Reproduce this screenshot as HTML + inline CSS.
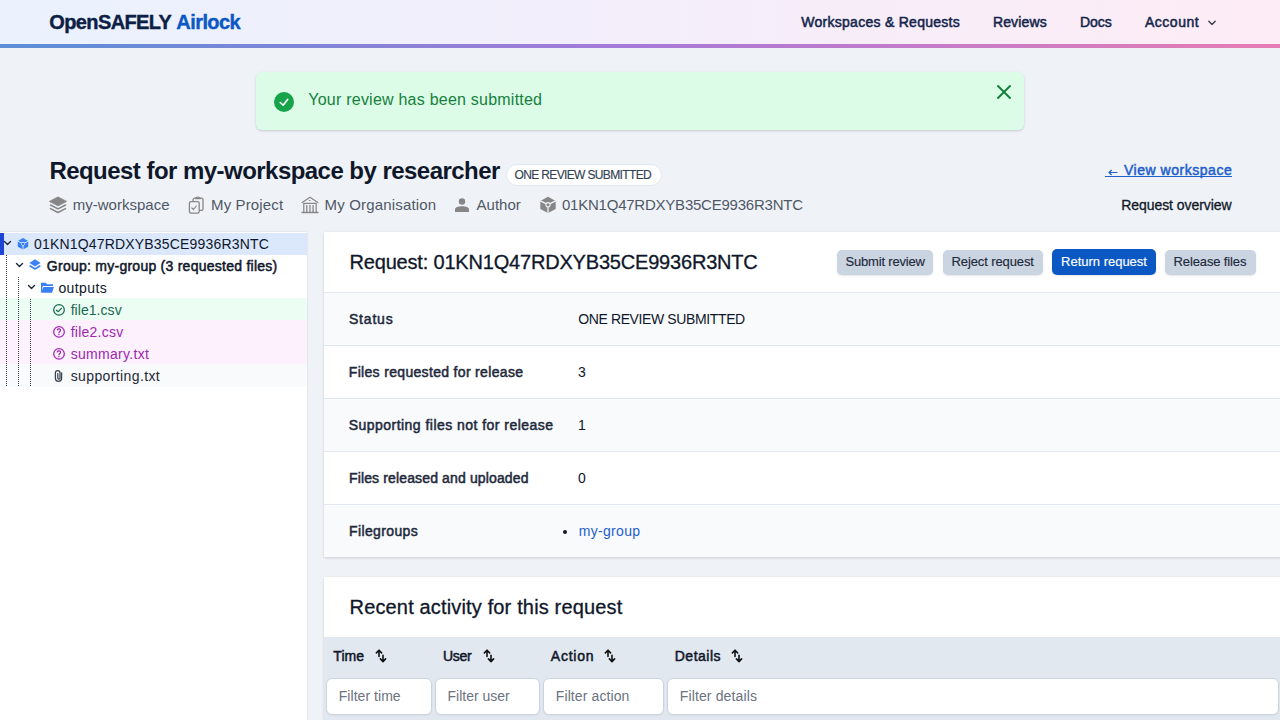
<!DOCTYPE html>
<html><head><meta charset="utf-8"><title>Airlock</title>
<style>
html,body{margin:0;padding:0}
body{width:1280px;height:720px;overflow:hidden;position:relative;background:#eff3f8;font-family:"Liberation Sans",sans-serif}
.t{position:absolute;white-space:nowrap;line-height:1}
.b{position:absolute}
</style></head><body>
<div class="b" style="left:0px;top:0px;width:1280px;height:44px;background:linear-gradient(to right,#eaf2fd,#f4eefb 50%,#fdecf5)"></div>
<div class="b" style="left:0px;top:44px;width:1280px;height:4px;background:linear-gradient(to right,#5a8fd6,#a87ad8 50%,#e67db4)"></div>
<div class="t" style="left:49.20px;top:12px;font-size:20px;color:#0d1f45;font-weight:bold;letter-spacing:-0.600px;-webkit-text-stroke:0.4px #0d1f45;">OpenSAFELY</div>
<div class="t" style="left:176.30px;top:12px;font-size:20px;color:#0a58c6;font-weight:bold;letter-spacing:-0.567px;-webkit-text-stroke:0.4px #0a58c6;">Airlock</div>
<div class="t" style="left:801.25px;top:15px;font-size:14px;color:#13254a;letter-spacing:0.275px;-webkit-text-stroke:0.5px #13254a;">Workspaces &amp; Requests</div>
<div class="t" style="left:992.95px;top:15px;font-size:14px;color:#13254a;letter-spacing:0.133px;-webkit-text-stroke:0.5px #13254a;">Reviews</div>
<div class="t" style="left:1079.95px;top:15px;font-size:14px;color:#13254a;letter-spacing:-0.067px;-webkit-text-stroke:0.5px #13254a;">Docs</div>
<div class="t" style="left:1144.95px;top:15px;font-size:14px;color:#13254a;letter-spacing:0.533px;-webkit-text-stroke:0.5px #13254a;">Account</div>
<svg class="b" style="left:1207px;top:19px" width="10" height="8" viewBox="0 0 10 8"><path d="M1.8 2.2 L5 5.4 L8.2 2.2" fill="none" stroke="#3a3d4a" stroke-width="1.35" stroke-linecap="round" stroke-linejoin="round"/></svg>
<div class="b" style="left:256px;top:72px;width:768px;height:58px;background:#dcfce7;border-radius:6px;box-shadow:0 1px 3px rgba(0,0,0,.12),0 1px 2px rgba(0,0,0,.06)"></div>
<svg class="b" style="left:274px;top:92px" width="20" height="20" viewBox="0 0 20 20"><circle cx="10" cy="10" r="10" fill="#16a34a"/><path d="M6.2 10.5 L9.2 13.2 L13.8 7.3" fill="none" stroke="#fff" stroke-width="1.6" stroke-linecap="round" stroke-linejoin="round"/></svg>
<div class="t" style="left:308.30px;top:92px;font-size:16px;color:#15803d;letter-spacing:0.228px;">Your review has been submitted</div>
<svg class="b" style="left:996px;top:84px" width="16" height="16" viewBox="0 0 16 16"><path d="M2 2 L14 14 M14 2 L2 14" stroke="#15803d" stroke-width="2" stroke-linecap="round"/></svg>
<div class="t" style="left:49.40px;top:159px;font-size:24px;color:#0f172a;font-weight:bold;letter-spacing:-0.538px;">Request for my-workspace by researcher</div>
<div class="b" style="left:505.5px;top:164px;width:156.0px;height:21.5px;background:#fff;border:1px solid #e2e8f0;border-radius:999px;box-sizing:border-box"></div>
<div class="t" style="left:514.58px;top:169px;font-size:12px;color:#334155;letter-spacing:-0.645px;-webkit-text-stroke:0.15px #334155;">ONE REVIEW SUBMITTED</div>
<svg class="b" style="left:1106px;top:166px" width="14" height="14" viewBox="0 0 14 14"><path d="M3 6.5 H11 M5.4 4.3 L3 6.5 L5.4 8.7" fill="none" stroke="#1f5fcc" stroke-width="1.2" stroke-linecap="round" stroke-linejoin="round"/></svg>
<div class="t" style="left:1123.95px;top:163px;font-size:14px;color:#1f5fcc;letter-spacing:0.531px;-webkit-text-stroke:0.5px #1f5fcc;">View workspace</div>
<div class="b" style="left:1105px;top:175.6px;width:127px;height:1.4000000000000057px;background:#1f5fcc"></div>
<div class="t" style="left:1121.15px;top:198px;font-size:14px;color:#111827;letter-spacing:-0.047px;-webkit-text-stroke:0.3px #111827;">Request overview</div>
<div class="t" style="left:72.70px;top:197px;font-size:15px;color:#505866;letter-spacing:0.018px;">my-workspace</div>
<div class="t" style="left:211.00px;top:197px;font-size:15px;color:#505866;letter-spacing:0.133px;">My Project</div>
<div class="t" style="left:324.50px;top:197px;font-size:15px;color:#505866;letter-spacing:0.171px;">My Organisation</div>
<div class="t" style="left:476.60px;top:197px;font-size:15px;color:#505866;">Author</div>
<div class="t" style="left:562.00px;top:197px;font-size:15px;color:#505866;letter-spacing:-0.232px;">01KN1Q47RDXYB35CE9936R3NTC</div>
<svg class="b" style="left:46px;top:194px" width="24" height="22" viewBox="0 0 24 22"><path d="M12 2.8 L20.8 7.4 L12 12 L3.2 7.4 Z" fill="#868686" stroke="#868686" stroke-width="0.6" stroke-linejoin="round"/><path d="M4.5 11 L12 14.9 L19.5 11" fill="none" stroke="#868686" stroke-width="1.6" stroke-linecap="round" stroke-linejoin="round"/><path d="M4.5 14.6 L12 18.5 L19.5 14.6" fill="none" stroke="#868686" stroke-width="1.6" stroke-linecap="round" stroke-linejoin="round"/></svg>
<svg class="b" style="left:184px;top:193px" width="24" height="24" viewBox="0 0 24 24"><rect x="5.4" y="8.6" width="9.8" height="11.6" rx="1.6" fill="none" stroke="#868686" stroke-width="1.3"/><path d="M9.1 8.6 V6.6 a1.4 1.4 0 0 1 1.4 -1.4 H17.6 a1.4 1.4 0 0 1 1.4 1.4 V15.9 a1.4 1.4 0 0 1 -1.4 1.4 H15.2" fill="none" stroke="#868686" stroke-width="1.3"/><path d="M11.5 5.6 C12 3.6 15.8 3.6 16.3 5.6 Z" fill="#e9ecef" stroke="#868686" stroke-width="1.2" stroke-linejoin="round"/><path d="M7.9 15 L9.5 16.5 L12.3 13" fill="none" stroke="#868686" stroke-width="1.2" stroke-linecap="round" stroke-linejoin="round"/></svg>
<svg class="b" style="left:298px;top:193px" width="24" height="24" viewBox="0 0 24 24"><path d="M4.2 9.6 L12 4.3 L19.8 9.6" fill="none" stroke="#868686" stroke-width="1.2" stroke-linecap="round" stroke-linejoin="round"/><ellipse cx="11.8" cy="7.4" rx="1" ry="0.5" fill="#868686"/><path d="M5.2 10.3 H18.8 M5.8 10.3 V19.2 M18.2 10.3 V19.2" fill="none" stroke="#868686" stroke-width="1.2"/><path d="M8.8 12 V19.2 M12 12 V19.2 M15.1 12 V19.2" fill="none" stroke="#868686" stroke-width="1.3"/><path d="M4 19.5 H20" stroke="#868686" stroke-width="1.3" stroke-linecap="round"/></svg>
<svg class="b" style="left:450px;top:193px" width="24" height="24" viewBox="0 0 24 24"><circle cx="12" cy="8.5" r="3.2" fill="#868686"/><path d="M5 19 V16.6 C5 14.2 8 13.2 12 13.2 C16 13.2 19 14.2 19 16.6 V19 Z" fill="#868686"/></svg>
<svg class="b" style="left:536px;top:193px" width="24" height="24" viewBox="0 0 24 24"><path d="M12 3.8 L19.7 8 V16 L12 19.9 L4.3 16 V8 Z" fill="#868686"/><path d="M12 11.7 L4.3 7.8 M12 11.7 L19.7 7.8 M12 11.7 V20" stroke="#eff3f8" stroke-width="1.3"/><circle cx="12" cy="11.7" r="2.6" fill="#eff3f8"/><circle cx="12" cy="11.7" r="1.5" fill="#868686"/></svg>
<div class="b" style="left:0px;top:232px;width:307px;height:488px;background:#fff;box-shadow:0 0 2px rgba(0,0,0,.12)"></div>
<div class="b" style="left:0px;top:233px;width:307px;height:22px;background:#dbe8fc"></div>
<div class="b" style="left:0px;top:233px;width:4px;height:22px;background:#1d45d6"></div>
<div class="b" style="left:0px;top:298px;width:307px;height:22px;background:#ecfdf3"></div>
<div class="b" style="left:0px;top:320px;width:307px;height:44px;background:#fdf1fd"></div>
<div class="b" style="left:0px;top:364px;width:307px;height:23px;background:#f8fafc"></div>
<div class="b" style="left:6px;top:255px;width:1px;height:132px;background:repeating-linear-gradient(to bottom,#3f4652 0 1px,transparent 1px 2px)"></div>
<div class="b" style="left:18px;top:277px;width:1px;height:110px;background:repeating-linear-gradient(to bottom,#3f4652 0 1px,transparent 1px 2px)"></div>
<div class="b" style="left:30px;top:299px;width:1px;height:88px;background:repeating-linear-gradient(to bottom,#3f4652 0 1px,transparent 1px 2px)"></div>
<svg class="b" style="left:3px;top:240px" width="9" height="7" viewBox="0 0 9 7"><path d="M1.5 1.5 L4.5 4.5 L7.5 1.5" fill="none" stroke="#1f2937" stroke-width="1.4" stroke-linecap="round" stroke-linejoin="round"/></svg>
<svg class="b" style="left:15px;top:262px" width="9" height="7" viewBox="0 0 9 7"><path d="M1.5 1.5 L4.5 4.5 L7.5 1.5" fill="none" stroke="#1f2937" stroke-width="1.4" stroke-linecap="round" stroke-linejoin="round"/></svg>
<svg class="b" style="left:27px;top:284px" width="9" height="7" viewBox="0 0 9 7"><path d="M1.5 1.5 L4.5 4.5 L7.5 1.5" fill="none" stroke="#1f2937" stroke-width="1.4" stroke-linecap="round" stroke-linejoin="round"/></svg>
<svg class="b" style="left:14px;top:234px" width="18" height="18" viewBox="0 0 18 18"><path d="M9 4 L14.2 6.9 V12.7 L9 15.6 L3.8 12.7 V6.9 Z" fill="#3a80f5"/><path d="M9 9.8 L3.8 7.2 M9 9.8 L14.2 7.2 M9 9.8 V15.6" stroke="#dbe8fc" stroke-width="1"/><circle cx="9" cy="9.8" r="2" fill="#dbe8fc"/><rect x="7.9" y="8.7" width="2.2" height="2.2" rx="0.5" fill="#3a80f5"/></svg>
<svg class="b" style="left:27px;top:256px" width="16" height="18" viewBox="0 0 16 18"><path d="M8 3.6 L13.2 6.9 L8 10.2 L2.8 6.9 Z" fill="#3a80f5" stroke="#3a80f5" stroke-width="0.5" stroke-linejoin="round"/><path d="M3.2 10 L8 13 L12.8 10" fill="none" stroke="#3a80f5" stroke-width="1.7" stroke-linecap="round" stroke-linejoin="round"/></svg>
<svg class="b" style="left:38px;top:278px" width="18" height="18" viewBox="0 0 18 18"><path d="M3 4.8 H7.8 L9 6.2 H15 V7.9 H5.8 C4.9 7.9 4.4 8.6 4.3 9.6 L4.1 13.8 L3 14.8 Z" fill="#3a80f5"/><path d="M6.1 9 H16 L14 14.8 H3.3 L4.9 10 C5.1 9.4 5.5 9 6.1 9 Z" fill="#3a80f5"/></svg>
<div class="t" style="left:34.00px;top:237px;font-size:14px;color:#0f172a;letter-spacing:0.178px;">01KN1Q47RDXYB35CE9936R3NTC</div>
<div class="t" style="left:46.85px;top:259px;font-size:14px;color:#0f172a;letter-spacing:0.253px;-webkit-text-stroke:0.5px #0f172a;">Group: my-group (3 requested files)</div>
<div class="t" style="left:58.40px;top:281px;font-size:14px;color:#0f172a;letter-spacing:0.400px;">outputs</div>
<svg class="b" style="left:50px;top:302px" width="18" height="18" viewBox="0 0 18 18"><circle cx="9" cy="7.9" r="5.3" fill="none" stroke="#17694f" stroke-width="1.25"/><path d="M6.4 8.2 L8.3 9.7 L11.4 6.3" fill="none" stroke="#17694f" stroke-width="1.25" stroke-linecap="round" stroke-linejoin="round"/></svg>
<div class="t" style="left:70.65px;top:303px;font-size:14px;color:#17694f;letter-spacing:0.056px;">file1.csv</div>
<svg class="b" style="left:50px;top:324px" width="18" height="18" viewBox="0 0 18 18"><circle cx="9" cy="7.9" r="5.3" fill="none" stroke="#9c28ae" stroke-width="1.25"/><path d="M7.4 5.9 C7.6 4.6 10.6 4.6 10.6 6.2 C10.6 7.3 9.2 7.5 9 8.7" fill="none" stroke="#9c28ae" stroke-width="1.2" stroke-linecap="round"/><circle cx="8.9" cy="10.5" r="0.75" fill="#9c28ae"/></svg>
<svg class="b" style="left:50px;top:346px" width="18" height="18" viewBox="0 0 18 18"><circle cx="9" cy="7.9" r="5.3" fill="none" stroke="#9c28ae" stroke-width="1.25"/><path d="M7.4 5.9 C7.6 4.6 10.6 4.6 10.6 6.2 C10.6 7.3 9.2 7.5 9 8.7" fill="none" stroke="#9c28ae" stroke-width="1.2" stroke-linecap="round"/><circle cx="8.9" cy="10.5" r="0.75" fill="#9c28ae"/></svg>
<div class="t" style="left:70.65px;top:325px;font-size:14px;color:#9c28ae;letter-spacing:0.256px;">file2.csv</div>
<div class="t" style="left:70.65px;top:347px;font-size:14px;color:#9c28ae;letter-spacing:0.305px;">summary.txt</div>
<svg class="b" style="left:50px;top:367px" width="18" height="18" viewBox="0 0 18 18"><path d="M11.6 5.8 V11.2 a3.1 3.1 0 0 1 -6.2 0 V6 a2.3 2.3 0 0 1 4.6 0 V11 a1.1 1.1 0 0 1 -2.2 0 V6.6" fill="none" stroke="#3a4350" stroke-width="1.25" stroke-linecap="round"/></svg>
<div class="t" style="left:70.65px;top:369px;font-size:14px;color:#1f2937;letter-spacing:0.388px;">supporting.txt</div>
<div class="b" style="left:324px;top:232px;width:966px;height:325px;background:#fff;box-shadow:0 1px 3px rgba(0,0,0,.1),0 1px 2px rgba(0,0,0,.06)"></div>
<div class="t" style="left:349.55px;top:252px;font-size:20px;color:#0f172a;letter-spacing:-0.188px;-webkit-text-stroke:0.3px #0f172a;">Request: 01KN1Q47RDXYB35CE9936R3NTC</div>
<div class="b" style="left:836.5px;top:249.5px;width:96.5px;height:25.0px;background:#cbd5e1;border-radius:5px;box-shadow:0 1px 2px rgba(0,0,0,.1)"></div>
<div class="t" style="left:845.58px;top:255px;font-size:13px;color:#1e293b;letter-spacing:-0.196px;-webkit-text-stroke:0.15px #1e293b;">Submit review</div>
<div class="b" style="left:942.6px;top:249.5px;width:100.39999999999998px;height:25.0px;background:#cbd5e1;border-radius:5px;box-shadow:0 1px 2px rgba(0,0,0,.1)"></div>
<div class="t" style="left:951.58px;top:255px;font-size:13px;color:#1e293b;letter-spacing:-0.112px;-webkit-text-stroke:0.15px #1e293b;">Reject request</div>
<div class="b" style="left:1052px;top:249px;width:104px;height:26px;background:#0b58c4;border-radius:5px;box-shadow:0 1px 2px rgba(0,0,0,.1)"></div>
<div class="t" style="left:1061.08px;top:255px;font-size:13px;color:#ffffff;letter-spacing:-0.012px;-webkit-text-stroke:0.15px #ffffff;">Return request</div>
<div class="b" style="left:1164.5px;top:249.5px;width:91.0px;height:25.0px;background:#cbd5e1;border-radius:5px;box-shadow:0 1px 2px rgba(0,0,0,.1)"></div>
<div class="t" style="left:1173.58px;top:255px;font-size:13px;color:#1e293b;letter-spacing:-0.129px;-webkit-text-stroke:0.15px #1e293b;">Release files</div>
<div class="b" style="left:324px;top:292px;width:966px;height:53px;background:#f8fafc;border-top:1px solid #e2e8f0;box-sizing:border-box"></div>
<div class="b" style="left:324px;top:345px;width:966px;height:53px;background:#fff;border-top:1px solid #e2e8f0;box-sizing:border-box"></div>
<div class="b" style="left:324px;top:398px;width:966px;height:53px;background:#f8fafc;border-top:1px solid #e2e8f0;box-sizing:border-box"></div>
<div class="b" style="left:324px;top:451px;width:966px;height:53px;background:#fff;border-top:1px solid #e2e8f0;box-sizing:border-box"></div>
<div class="b" style="left:324px;top:504px;width:966px;height:53px;background:#f8fafc;border-top:1px solid #e2e8f0;box-sizing:border-box"></div>
<div class="t" style="left:348.95px;top:312px;font-size:14px;color:#1e293b;letter-spacing:0.820px;-webkit-text-stroke:0.5px #1e293b;">Status</div>
<div class="t" style="left:578.20px;top:312px;font-size:14px;color:#0f172a;letter-spacing:-0.379px;">ONE REVIEW SUBMITTED</div>
<div class="t" style="left:348.75px;top:365px;font-size:14px;color:#1e293b;letter-spacing:0.327px;-webkit-text-stroke:0.5px #1e293b;">Files requested for release</div>
<div class="t" style="left:578.00px;top:365px;font-size:14px;color:#0f172a;">3</div>
<div class="t" style="left:348.75px;top:418px;font-size:14px;color:#1e293b;letter-spacing:0.465px;-webkit-text-stroke:0.5px #1e293b;">Supporting files not for release</div>
<div class="t" style="left:578.00px;top:418px;font-size:14px;color:#0f172a;">1</div>
<div class="t" style="left:349.00px;top:471px;font-size:14px;color:#1e293b;letter-spacing:0.138px;-webkit-text-stroke:0.5px #1e293b;">Files released and uploaded</div>
<div class="t" style="left:578.00px;top:471px;font-size:14px;color:#0f172a;">0</div>
<div class="t" style="left:349.00px;top:524px;font-size:14px;color:#1e293b;letter-spacing:0.372px;-webkit-text-stroke:0.5px #1e293b;">Filegroups</div>
<div class="b" style="left:563px;top:530px;width:4px;height:4px;background:#0f172a;border-radius:50%"></div>
<div class="t" style="left:578.75px;top:524px;font-size:14px;color:#1f5fcc;letter-spacing:0.307px;">my-group</div>
<div class="b" style="left:324px;top:577px;width:966px;height:153px;background:#fff;box-shadow:0 1px 3px rgba(0,0,0,.1),0 1px 2px rgba(0,0,0,.06)"></div>
<div class="t" style="left:349.55px;top:597px;font-size:20px;color:#0f172a;letter-spacing:0.155px;-webkit-text-stroke:0.3px #0f172a;">Recent activity for this request</div>
<div class="b" style="left:324px;top:637px;width:966px;height:93px;background:#e2e8f0"></div>
<div class="t" style="left:333.35px;top:649px;font-size:14px;color:#0f172a;letter-spacing:0.067px;-webkit-text-stroke:0.5px #0f172a;">Time</div>
<svg class="b" style="left:370px;top:645px" width="22" height="22" viewBox="0 0 22 22"><path d="M9 11.5 V5.6 M6.4 7.9 L9 5.2 L11.6 7.9" fill="none" stroke="#111" stroke-width="1.6" stroke-linecap="round" stroke-linejoin="round"/><path d="M13 10.3 V16.2 M10.4 13.9 L13 16.6 L15.6 13.9" fill="none" stroke="#111" stroke-width="1.6" stroke-linecap="round" stroke-linejoin="round"/></svg>
<div class="t" style="left:443.05px;top:649px;font-size:14px;color:#0f172a;letter-spacing:-0.333px;-webkit-text-stroke:0.5px #0f172a;">User</div>
<svg class="b" style="left:478px;top:645px" width="22" height="22" viewBox="0 0 22 22"><path d="M9 11.5 V5.6 M6.4 7.9 L9 5.2 L11.6 7.9" fill="none" stroke="#111" stroke-width="1.6" stroke-linecap="round" stroke-linejoin="round"/><path d="M13 10.3 V16.2 M10.4 13.9 L13 16.6 L15.6 13.9" fill="none" stroke="#111" stroke-width="1.6" stroke-linecap="round" stroke-linejoin="round"/></svg>
<div class="t" style="left:550.85px;top:649px;font-size:14px;color:#0f172a;letter-spacing:0.760px;-webkit-text-stroke:0.5px #0f172a;">Action</div>
<svg class="b" style="left:599px;top:645px" width="22" height="22" viewBox="0 0 22 22"><path d="M9 11.5 V5.6 M6.4 7.9 L9 5.2 L11.6 7.9" fill="none" stroke="#111" stroke-width="1.6" stroke-linecap="round" stroke-linejoin="round"/><path d="M13 10.3 V16.2 M10.4 13.9 L13 16.6 L15.6 13.9" fill="none" stroke="#111" stroke-width="1.6" stroke-linecap="round" stroke-linejoin="round"/></svg>
<div class="t" style="left:674.75px;top:649px;font-size:14px;color:#0f172a;letter-spacing:0.500px;-webkit-text-stroke:0.5px #0f172a;">Details</div>
<svg class="b" style="left:726px;top:645px" width="22" height="22" viewBox="0 0 22 22"><path d="M9 11.5 V5.6 M6.4 7.9 L9 5.2 L11.6 7.9" fill="none" stroke="#111" stroke-width="1.6" stroke-linecap="round" stroke-linejoin="round"/><path d="M13 10.3 V16.2 M10.4 13.9 L13 16.6 L15.6 13.9" fill="none" stroke="#111" stroke-width="1.6" stroke-linecap="round" stroke-linejoin="round"/></svg>
<div class="b" style="left:325.5px;top:677.5px;width:106.0px;height:37.0px;background:#fff;border:1px solid #cbd5e1;border-radius:6px;box-sizing:border-box;box-shadow:0 1px 2px rgba(0,0,0,.05)"></div>
<div class="t" style="left:338.75px;top:689px;font-size:14px;color:#6b7280;letter-spacing:0.045px;">Filter time</div>
<div class="b" style="left:434.5px;top:677.5px;width:105.0px;height:37.0px;background:#fff;border:1px solid #cbd5e1;border-radius:6px;box-sizing:border-box;box-shadow:0 1px 2px rgba(0,0,0,.05)"></div>
<div class="t" style="left:447.50px;top:689px;font-size:14px;color:#6b7280;">Filter user</div>
<div class="b" style="left:542.5px;top:677.5px;width:121.0px;height:37.0px;background:#fff;border:1px solid #cbd5e1;border-radius:6px;box-sizing:border-box;box-shadow:0 1px 2px rgba(0,0,0,.05)"></div>
<div class="t" style="left:555.80px;top:689px;font-size:14px;color:#6b7280;letter-spacing:0.100px;">Filter action</div>
<div class="b" style="left:666.5px;top:677.5px;width:612.0px;height:37.0px;background:#fff;border:1px solid #cbd5e1;border-radius:6px;box-sizing:border-box;box-shadow:0 1px 2px rgba(0,0,0,.05)"></div>
<div class="t" style="left:679.75px;top:689px;font-size:14px;color:#6b7280;letter-spacing:0.135px;">Filter details</div>
</body></html>
